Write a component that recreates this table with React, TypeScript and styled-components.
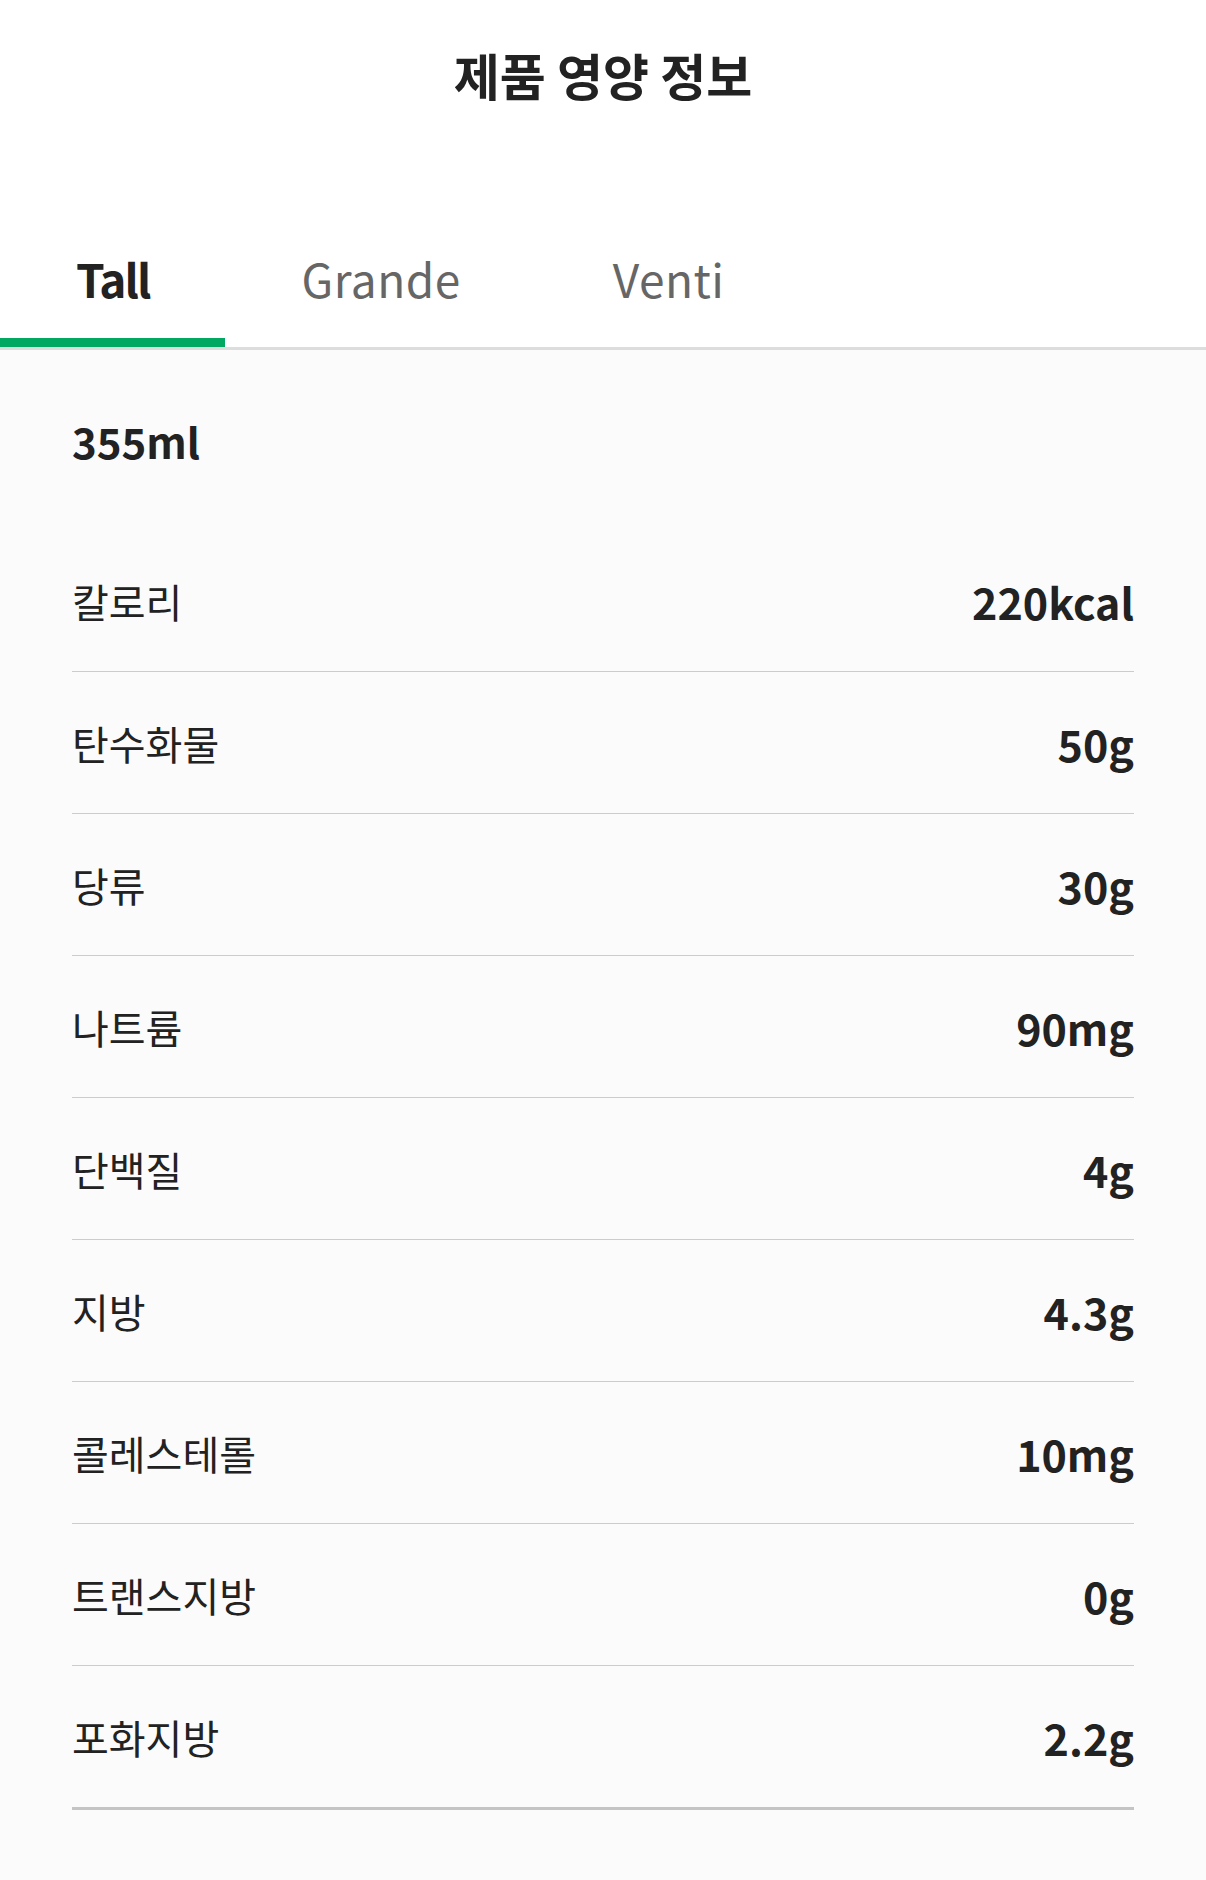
import React, { useState } from "react";
import styled, { createGlobalStyle } from "styled-components";

const GlobalStyle = createGlobalStyle`
  html, body {
    margin: 0;
    padding: 0;
    background: #ffffff;
  }
  body {
    font-family: "Noto Sans CJK KR", "Noto Sans", sans-serif;
    color: #222222;
  }
`;

const Page = styled.div`
  width: 1206px;
  min-height: 1880px;
  display: flex;
  flex-direction: column;
  background: #fbfbfb;
`;

const Header = styled.div`
  background: #ffffff;
`;

const Title = styled.h1`
  margin: 0;
  height: 154px;
  line-height: 148px;
  text-align: center;
  font-size: 50px;
  font-weight: 700;
  color: #222222;
`;

const TabList = styled.div`
  display: flex;
  padding-top: 97px;
  border-bottom: 3px solid #dddddd;
`;

const Tab = styled.button<{ $active: boolean }>`
  appearance: none;
  background: none;
  border: none;
  margin: 0;
  padding: 0 76px 32px;
  font-family: inherit;
  font-size: 46px;
  line-height: 55px;
  font-weight: ${(p) => (p.$active ? 700 : 400)};
  letter-spacing: ${(p) => (p.$active ? "-2px" : "0.5px")};
  color: ${(p) => (p.$active ? "#222222" : "#666666")};
  border-bottom: 9px solid ${(p) => (p.$active ? "#00a862" : "transparent")};
  cursor: pointer;
`;

const Content = styled.div`
  padding: 66px 72px 0;
  display: flex;
  flex-direction: column;
`;

const Volume = styled.div`
  font-size: 42px;
  line-height: 50px;
  font-weight: 700;
  color: #222222;
  margin-bottom: 64px;
`;

const List = styled.div`
  display: flex;
  flex-direction: column;
`;

const Row = styled.div<{ $last?: boolean }>`
  height: 141px;
  display: flex;
  align-items: center;
  justify-content: space-between;
  border-bottom: ${(p) => (p.$last ? "3px solid #c4c4c4" : "1px solid #cccccc")};
`;

const Label = styled.span`
  font-size: 40px;
  font-weight: 400;
  color: #222222;
`;

const Value = styled.span`
  font-size: 43px;
  font-weight: 700;
  color: #222222;
`;

const tabs = ["Tall", "Grande", "Venti"];

const rows: [string, string][] = [
  ["칼로리", "220kcal"],
  ["탄수화물", "50g"],
  ["당류", "30g"],
  ["나트륨", "90mg"],
  ["단백질", "4g"],
  ["지방", "4.3g"],
  ["콜레스테롤", "10mg"],
  ["트랜스지방", "0g"],
  ["포화지방", "2.2g"],
];

export default function App() {
  const [active, setActive] = useState(0);
  return (
    <>
      <GlobalStyle />
      <Page>
        <Header>
          <Title>제품 영양 정보</Title>
          <TabList>
            {tabs.map((t, i) => (
              <Tab key={t} $active={i === active} onClick={() => setActive(i)}>
                {t}
              </Tab>
            ))}
          </TabList>
        </Header>
        <Content>
          <Volume>355ml</Volume>
          <List>
            {rows.map(([l, v], i) => (
              <Row key={l} $last={i === rows.length - 1}>
                <Label>{l}</Label>
                <Value>{v}</Value>
              </Row>
            ))}
          </List>
        </Content>
      </Page>
    </>
  );
}
